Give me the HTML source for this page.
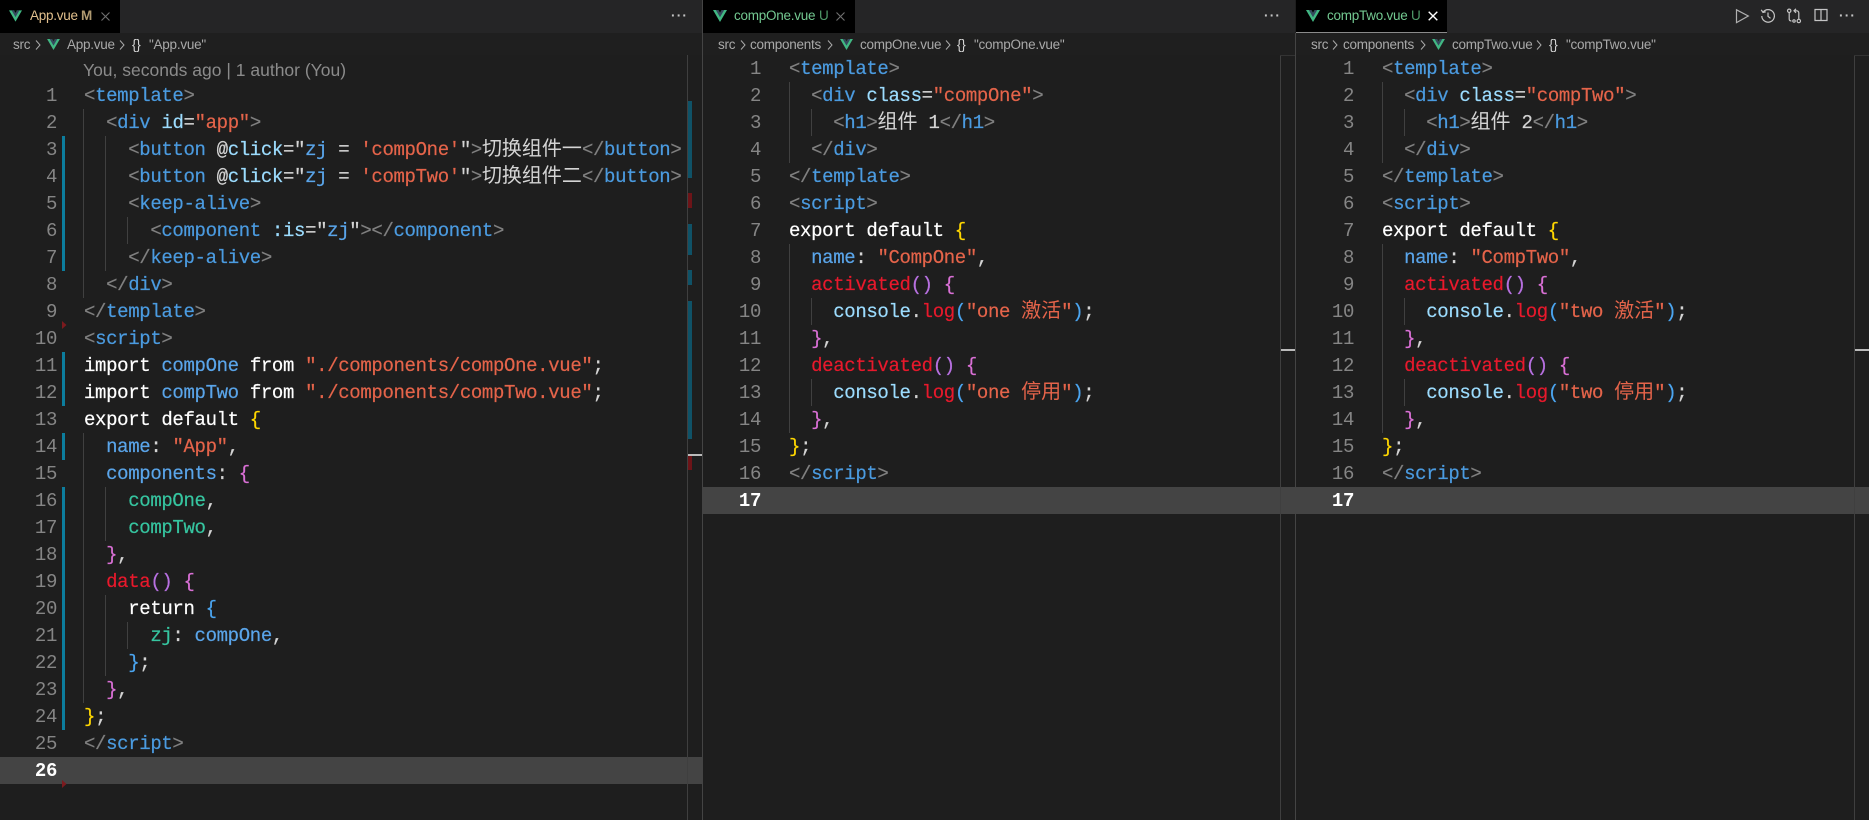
<!DOCTYPE html>
<html><head><meta charset="utf-8"><style>
html,body{margin:0;padding:0;width:1869px;height:820px;overflow:hidden;background:#1e1e1e}
.a{position:absolute}
.pane{position:absolute;top:0;height:820px;overflow:hidden;background:#1e1e1e}
.tabbar{position:absolute;left:0;right:0;top:0;height:33px;background:#252526}
.tab{position:absolute;top:0;height:33px;background:#000}
.crumbbar{position:absolute;left:0;right:0;top:33px;height:22px;background:#1f1f1f}
.ui{position:absolute;font:13.5px/22px "Liberation Sans",sans-serif;letter-spacing:-.25px;white-space:pre;color:#a9a9a9}
.hl{position:absolute;left:0;right:0;height:27px;background:#444}
.rul{position:absolute;width:1px;top:55px;bottom:0;background:#3f3f3f}
.rult{position:absolute;height:1px;top:55px;background:#333}
.g{position:absolute;width:1px;background:#404040}
.gut{position:absolute;left:62px;width:3px;background:#0c7d9d}
.nums,.code{position:absolute;font:19px/27px "Liberation Mono",monospace;letter-spacing:-.35px;margin-top:1px}
.nums{left:0;text-align:right;color:#858585}
.nums b{color:#fff;font-weight:bold}
.nums div,.code div{height:27px;white-space:pre}
.code{color:#d4d4d4;-webkit-text-stroke:.2px}
.p{color:#808080}.t{color:#4b9be0}.n{color:#9cdcfe}.s{color:#e5644a}.k{color:#fff}
.y{color:#ffd700}.o{color:#da70d6}.b{color:#4ba5f0}.f{color:#e8192c}.v{color:#5aa5ea}.c{color:#36c5a0}.m{color:#b770e0}
.z{font:20px/0 "Noto Sans CJK SC",sans-serif;letter-spacing:0;-webkit-text-stroke:0}
svg{position:absolute;display:block}
</style></head><body>

<!-- PANE 1 -->
<div class="pane" style="left:0;width:702px">
<div class="tabbar"></div>
<div class="tab" style="left:0;width:120px"></div>
<svg style="left:9px;top:10px" width="13" height="12" viewBox="0 0 14 12"><polygon points="0,0 14,0 7,12" fill="#41b883"/><polygon points="2.8,0 7,7.2 11.2,0 8.6,0 7,2.8 5.4,0" fill="#35495e"/><polygon points="5.4,0 8.6,0 7,2.8" fill="#000"/></svg>
<div class="ui" style="left:30px;top:5px;color:#e2c08d">App.vue</div>
<div class="ui" style="left:81px;top:5px;color:#b09a70;font-weight:bold">M</div>
<svg style="left:101px;top:12px" width="9" height="9" viewBox="0 0 9 9"><path d="M.5.5l8 8M8.5.5l-8 8" stroke="#707070" stroke-width="1.1"/></svg>
<div class="ui" style="left:671px;top:5px;color:#c5c5c5;font-weight:bold;letter-spacing:1.2px">···</div>
<div class="crumbbar"></div>
<div class="ui" style="left:13px;top:34px">src</div>
<svg style="left:35px;top:40px" width="6" height="10" viewBox="0 0 6 10"><path d="M1 .5l4 4.5-4 4.5" fill="none" stroke="#a9a9a9"/></svg>
<svg style="left:47px;top:39px" width="13" height="11" viewBox="0 0 14 12"><polygon points="0,0 14,0 7,12" fill="#41b883"/><polygon points="2.8,0 7,7.2 11.2,0 8.6,0 7,2.8 5.4,0" fill="#35495e"/><polygon points="5.4,0 8.6,0 7,2.8" fill="#1f1f1f"/></svg>
<div class="ui" style="left:67px;top:34px">App.vue</div>
<svg style="left:119px;top:40px" width="6" height="10" viewBox="0 0 6 10"><path d="M1 .5l4 4.5-4 4.5" fill="none" stroke="#a9a9a9"/></svg>
<div class="ui" style="left:132px;top:34px;color:#d4d4d4">{}</div>
<div class="ui" style="left:149px;top:34px">"App.vue"</div>

<div class="ui" style="left:83px;top:57px;line-height:26px;font-size:17.5px;letter-spacing:0;color:#8b8b8b">You, seconds ago | 1 author (You)</div>

<div class="hl" style="top:757px"></div>
<div class="rul" style="left:687px"></div>

<div class="a" style="left:688px;top:101px;width:4px;height:77px;background:#0f5267"></div>
<div class="a" style="left:688px;top:193px;width:4px;height:15px;background:#6d1418"></div>
<div class="a" style="left:688px;top:224px;width:4px;height:31px;background:#0f5267"></div>
<div class="a" style="left:688px;top:270px;width:4px;height:15px;background:#0f5267"></div>
<div class="a" style="left:688px;top:301px;width:4px;height:138px;background:#0f5267"></div>
<div class="a" style="left:688px;top:454px;width:14px;height:2px;background:#bbb"></div>
<div class="a" style="left:688px;top:456px;width:4px;height:14px;background:#6d1418"></div>

<div class="gut" style="top:136px;height:135px"></div>
<div class="gut" style="top:352px;height:54px"></div>
<div class="gut" style="top:433px;height:27px"></div>
<div class="gut" style="top:487px;height:243px"></div>
<svg style="left:62px;top:320px" width="5" height="10" viewBox="0 0 5 10"><polygon points="0,1 4.5,5 0,9" fill="#7c1a1e"/></svg>
<svg style="left:62px;top:779px" width="5" height="10" viewBox="0 0 5 10"><polygon points="0,1 4.5,5 0,9" fill="#7c1a1e"/></svg>

<div class="g" style="left:83px;top:109px;height:189px"></div>
<div class="g" style="left:105px;top:136px;height:135px"></div>
<div class="g" style="left:127px;top:217px;height:27px"></div>
<div class="g" style="left:83px;top:433px;height:270px"></div>
<div class="g" style="left:105px;top:487px;height:54px"></div>
<div class="g" style="left:105px;top:595px;height:81px"></div>
<div class="g" style="left:127px;top:622px;height:27px"></div>

<div class="nums" style="top:82px;width:57px"><div>1</div><div>2</div><div>3</div><div>4</div><div>5</div><div>6</div><div>7</div><div>8</div><div>9</div><div>10</div><div>11</div><div>12</div><div>13</div><div>14</div><div>15</div><div>16</div><div>17</div><div>18</div><div>19</div><div>20</div><div>21</div><div>22</div><div>23</div><div>24</div><div>25</div><div><b>26</b></div></div>
<div class="code" style="left:84px;top:82px">
<div><span class="p">&lt;</span><span class="t">template</span><span class="p">&gt;</span></div>
<div>  <span class="p">&lt;</span><span class="t">div</span> <span class="n">id</span>=<span class="s">"app"</span><span class="p">&gt;</span></div>
<div>    <span class="p">&lt;</span><span class="t">button</span> @<span class="n">click</span>="<span class="v">zj</span> = <span class="s">'compOne'</span>"<span class="p">&gt;</span><span class="z">切换组件一</span><span class="p">&lt;/</span><span class="t">button</span><span class="p">&gt;</span></div>
<div>    <span class="p">&lt;</span><span class="t">button</span> @<span class="n">click</span>="<span class="v">zj</span> = <span class="s">'compTwo'</span>"<span class="p">&gt;</span><span class="z">切换组件二</span><span class="p">&lt;/</span><span class="t">button</span><span class="p">&gt;</span></div>
<div>    <span class="p">&lt;</span><span class="t">keep-alive</span><span class="p">&gt;</span></div>
<div>      <span class="p">&lt;</span><span class="t">component</span> <span class="n">:is</span>="<span class="v">zj</span>"<span class="p">&gt;&lt;/</span><span class="t">component</span><span class="p">&gt;</span></div>
<div>    <span class="p">&lt;/</span><span class="t">keep-alive</span><span class="p">&gt;</span></div>
<div>  <span class="p">&lt;/</span><span class="t">div</span><span class="p">&gt;</span></div>
<div><span class="p">&lt;/</span><span class="t">template</span><span class="p">&gt;</span></div>
<div><span class="p">&lt;</span><span class="t">script</span><span class="p">&gt;</span></div>
<div><span class="k">import</span> <span class="v">compOne</span> <span class="k">from</span> <span class="s">"./components/compOne.vue"</span>;</div>
<div><span class="k">import</span> <span class="v">compTwo</span> <span class="k">from</span> <span class="s">"./components/compTwo.vue"</span>;</div>
<div><span class="k">export default</span> <span class="y">{</span></div>
<div>  <span class="v">name</span>: <span class="s">"App"</span>,</div>
<div>  <span class="v">components</span>: <span class="o">{</span></div>
<div>    <span class="c">compOne</span>,</div>
<div>    <span class="c">compTwo</span>,</div>
<div>  <span class="o">}</span>,</div>
<div>  <span class="f">data</span><span class="m">()</span> <span class="o">{</span></div>
<div>    <span class="k">return</span> <span class="b">{</span></div>
<div>      <span class="c">zj</span>: <span class="v">compOne</span>,</div>
<div>    <span class="b">}</span>;</div>
<div>  <span class="o">}</span>,</div>
<div><span class="y">}</span>;</div>
<div><span class="p">&lt;/</span><span class="t">script</span><span class="p">&gt;</span></div>
<div></div>
</div>
</div>
<div class="a" style="left:702px;top:0;width:1px;height:820px;background:#444"></div>

<!-- PANE 2 -->
<div class="pane" style="left:703px;width:592px">
<div class="tabbar"></div>
<div class="tab" style="left:0;width:152px"></div>
<svg style="left:10px;top:10px" width="14" height="12" viewBox="0 0 14 12"><polygon points="0,0 14,0 7,12" fill="#41b883"/><polygon points="2.8,0 7,7.2 11.2,0 8.6,0 7,2.8 5.4,0" fill="#35495e"/><polygon points="5.4,0 8.6,0 7,2.8" fill="#000"/></svg>
<div class="ui" style="left:31px;top:5px;color:#73c991">compOne.vue</div>
<div class="ui" style="left:116px;top:5px;color:#4f9a68">U</div>
<svg style="left:133px;top:12px" width="9" height="9" viewBox="0 0 9 9"><path d="M.5.5l8 8M8.5.5l-8 8" stroke="#707070" stroke-width="1.1"/></svg>
<div class="ui" style="left:561px;top:5px;color:#c5c5c5;font-weight:bold;letter-spacing:1.2px">···</div>
<div class="crumbbar"></div>
<div class="ui" style="left:15px;top:34px">src</div>
<svg style="left:37px;top:40px" width="6" height="10" viewBox="0 0 6 10"><path d="M1 .5l4 4.5-4 4.5" fill="none" stroke="#a9a9a9"/></svg>
<div class="ui" style="left:47px;top:34px">components</div>
<svg style="left:124px;top:40px" width="6" height="10" viewBox="0 0 6 10"><path d="M1 .5l4 4.5-4 4.5" fill="none" stroke="#a9a9a9"/></svg>
<svg style="left:137px;top:39px" width="13" height="11" viewBox="0 0 14 12"><polygon points="0,0 14,0 7,12" fill="#41b883"/><polygon points="2.8,0 7,7.2 11.2,0 8.6,0 7,2.8 5.4,0" fill="#35495e"/><polygon points="5.4,0 8.6,0 7,2.8" fill="#1f1f1f"/></svg>
<div class="ui" style="left:157px;top:34px">compOne.vue</div>
<svg style="left:242px;top:40px" width="6" height="10" viewBox="0 0 6 10"><path d="M1 .5l4 4.5-4 4.5" fill="none" stroke="#a9a9a9"/></svg>
<div class="ui" style="left:254px;top:34px;color:#d4d4d4">{}</div>
<div class="ui" style="left:271px;top:34px">"compOne.vue"</div>

<div class="hl" style="top:487px"></div>
<div class="rul" style="left:577px"></div>
<div class="rult" style="left:577px;width:15px"></div>
<div class="a" style="left:578px;top:349px;width:14px;height:2px;background:#bbb"></div>

<div class="g" style="left:86px;top:82px;height:81px"></div>
<div class="g" style="left:108px;top:109px;height:27px"></div>
<div class="g" style="left:86px;top:244px;height:189px"></div>
<div class="g" style="left:108px;top:298px;height:27px"></div>
<div class="g" style="left:108px;top:379px;height:27px"></div>

<div class="nums" style="top:55px;width:58px"><div>1</div><div>2</div><div>3</div><div>4</div><div>5</div><div>6</div><div>7</div><div>8</div><div>9</div><div>10</div><div>11</div><div>12</div><div>13</div><div>14</div><div>15</div><div>16</div><div><b>17</b></div></div>
<div class="code" style="left:86px;top:55px">
<div><span class="p">&lt;</span><span class="t">template</span><span class="p">&gt;</span></div>
<div>  <span class="p">&lt;</span><span class="t">div</span> <span class="n">class</span>=<span class="s">"compOne"</span><span class="p">&gt;</span></div>
<div>    <span class="p">&lt;</span><span class="t">h1</span><span class="p">&gt;</span><span class="z">组件</span> 1<span class="p">&lt;/</span><span class="t">h1</span><span class="p">&gt;</span></div>
<div>  <span class="p">&lt;/</span><span class="t">div</span><span class="p">&gt;</span></div>
<div><span class="p">&lt;/</span><span class="t">template</span><span class="p">&gt;</span></div>
<div><span class="p">&lt;</span><span class="t">script</span><span class="p">&gt;</span></div>
<div><span class="k">export default</span> <span class="y">{</span></div>
<div>  <span class="v">name</span>: <span class="s">"CompOne"</span>,</div>
<div>  <span class="f">activated</span><span class="m">()</span> <span class="o">{</span></div>
<div>    <span class="n">console</span>.<span class="f">log</span><span class="b">(</span><span class="s">"one <span class="z">激活</span>"</span><span class="b">)</span>;</div>
<div>  <span class="o">}</span>,</div>
<div>  <span class="f">deactivated</span><span class="m">()</span> <span class="o">{</span></div>
<div>    <span class="n">console</span>.<span class="f">log</span><span class="b">(</span><span class="s">"one <span class="z">停用</span>"</span><span class="b">)</span>;</div>
<div>  <span class="o">}</span>,</div>
<div><span class="y">}</span>;</div>
<div><span class="p">&lt;/</span><span class="t">script</span><span class="p">&gt;</span></div>
<div></div>
</div>
</div>
<div class="a" style="left:1295px;top:33px;width:1px;height:787px;background:#444"></div>

<!-- PANE 3 -->
<div class="pane" style="left:1296px;width:573px">
<div class="tabbar"></div>
<div class="tab" style="left:-1px;width:152px;height:32px"></div>
<div class="a" style="left:-1px;top:32px;width:152px;height:1px;background:#8a8a8a"></div>
<svg style="left:10px;top:10px" width="14" height="12" viewBox="0 0 14 12"><polygon points="0,0 14,0 7,12" fill="#41b883"/><polygon points="2.8,0 7,7.2 11.2,0 8.6,0 7,2.8 5.4,0" fill="#35495e"/><polygon points="5.4,0 8.6,0 7,2.8" fill="#000"/></svg>
<div class="ui" style="left:31px;top:5px;color:#73c991">compTwo.vue</div>
<div class="ui" style="left:115px;top:5px;color:#4f9a68">U</div>
<svg style="left:132px;top:11px" width="10" height="10" viewBox="0 0 10 10"><path d="M.7.7l8.6 8.6M9.3.7L.7 9.3" stroke="#fff" stroke-width="1.4"/></svg>
<svg style="left:438px;top:8px" width="16" height="16" viewBox="0 0 16 16"><path d="M2.5 1.8L14.3 8 2.5 14.6z" fill="none" stroke="#b0b0b0" stroke-width="1.2"/></svg>
<svg style="left:464px;top:8px" width="16" height="16" viewBox="0 0 16 16"><path d="M3 4.2A6.3 6.3 0 1 1 1.8 8M1.2 1.8L3 4.4l2.8-.6M8 4.5V8.3l2.5 2" fill="none" stroke="#c5c5c5" stroke-width="1.2"/></svg>
<svg style="left:490px;top:8px" width="16" height="16" viewBox="0 0 16 16"><g fill="none" stroke="#c5c5c5" stroke-width="1.2"><circle cx="3.2" cy="2.8" r="1.7"/><circle cx="12.8" cy="13" r="1.7"/><circle cx="8" cy="13" r="1.2"/><path d="M3.2 4.5V11c0 1.5 1 2 2.2 2M12.8 11.3V5c0-1.5-1-2.2-2.3-2.2H8.5M10 .8L8 2.8l2 2"/></g></svg>
<svg style="left:518px;top:8px" width="14" height="14" viewBox="0 0 14 14"><path d="M1 1.5h12v11H1zM7 1.5v11" fill="none" stroke="#c5c5c5" stroke-width="1.2"/></svg>
<div class="ui" style="left:543px;top:5px;color:#c5c5c5;font-weight:bold;letter-spacing:1.2px">···</div>
<div class="crumbbar"></div>
<div class="ui" style="left:15px;top:34px">src</div>
<svg style="left:36px;top:40px" width="6" height="10" viewBox="0 0 6 10"><path d="M1 .5l4 4.5-4 4.5" fill="none" stroke="#a9a9a9"/></svg>
<div class="ui" style="left:47px;top:34px">components</div>
<svg style="left:124px;top:40px" width="6" height="10" viewBox="0 0 6 10"><path d="M1 .5l4 4.5-4 4.5" fill="none" stroke="#a9a9a9"/></svg>
<svg style="left:136px;top:39px" width="13" height="11" viewBox="0 0 14 12"><polygon points="0,0 14,0 7,12" fill="#41b883"/><polygon points="2.8,0 7,7.2 11.2,0 8.6,0 7,2.8 5.4,0" fill="#35495e"/><polygon points="5.4,0 8.6,0 7,2.8" fill="#1f1f1f"/></svg>
<div class="ui" style="left:156px;top:34px">compTwo.vue</div>
<svg style="left:240px;top:40px" width="6" height="10" viewBox="0 0 6 10"><path d="M1 .5l4 4.5-4 4.5" fill="none" stroke="#a9a9a9"/></svg>
<div class="ui" style="left:253px;top:34px;color:#d4d4d4">{}</div>
<div class="ui" style="left:270px;top:34px">"compTwo.vue"</div>

<div class="hl" style="top:487px"></div>
<div class="rul" style="left:558px"></div>
<div class="rult" style="left:558px;width:15px"></div>
<div class="a" style="left:559px;top:349px;width:14px;height:2px;background:#bbb"></div>

<div class="g" style="left:86px;top:82px;height:81px"></div>
<div class="g" style="left:108px;top:109px;height:27px"></div>
<div class="g" style="left:86px;top:244px;height:189px"></div>
<div class="g" style="left:108px;top:298px;height:27px"></div>
<div class="g" style="left:108px;top:379px;height:27px"></div>

<div class="nums" style="top:55px;width:58px"><div>1</div><div>2</div><div>3</div><div>4</div><div>5</div><div>6</div><div>7</div><div>8</div><div>9</div><div>10</div><div>11</div><div>12</div><div>13</div><div>14</div><div>15</div><div>16</div><div><b>17</b></div></div>
<div class="code" style="left:86px;top:55px">
<div><span class="p">&lt;</span><span class="t">template</span><span class="p">&gt;</span></div>
<div>  <span class="p">&lt;</span><span class="t">div</span> <span class="n">class</span>=<span class="s">"compTwo"</span><span class="p">&gt;</span></div>
<div>    <span class="p">&lt;</span><span class="t">h1</span><span class="p">&gt;</span><span class="z">组件</span> 2<span class="p">&lt;/</span><span class="t">h1</span><span class="p">&gt;</span></div>
<div>  <span class="p">&lt;/</span><span class="t">div</span><span class="p">&gt;</span></div>
<div><span class="p">&lt;/</span><span class="t">template</span><span class="p">&gt;</span></div>
<div><span class="p">&lt;</span><span class="t">script</span><span class="p">&gt;</span></div>
<div><span class="k">export default</span> <span class="y">{</span></div>
<div>  <span class="v">name</span>: <span class="s">"CompTwo"</span>,</div>
<div>  <span class="f">activated</span><span class="m">()</span> <span class="o">{</span></div>
<div>    <span class="n">console</span>.<span class="f">log</span><span class="b">(</span><span class="s">"two <span class="z">激活</span>"</span><span class="b">)</span>;</div>
<div>  <span class="o">}</span>,</div>
<div>  <span class="f">deactivated</span><span class="m">()</span> <span class="o">{</span></div>
<div>    <span class="n">console</span>.<span class="f">log</span><span class="b">(</span><span class="s">"two <span class="z">停用</span>"</span><span class="b">)</span>;</div>
<div>  <span class="o">}</span>,</div>
<div><span class="y">}</span>;</div>
<div><span class="p">&lt;/</span><span class="t">script</span><span class="p">&gt;</span></div>
<div></div>
</div>
</div>
</body></html>
